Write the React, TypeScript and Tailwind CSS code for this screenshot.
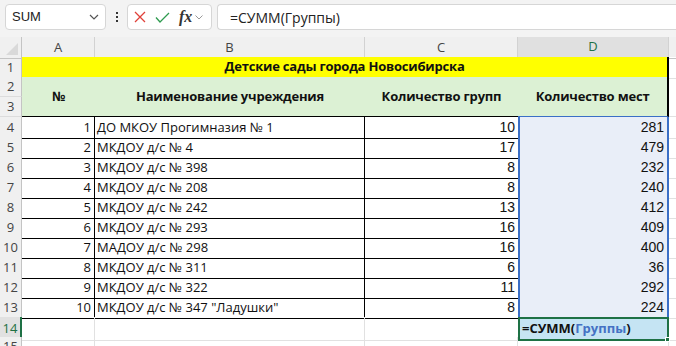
import React from 'react';

const rows: [number, string, number, number][] = [
  [1, 'ДО МКОУ Прогимназия № 1', 10, 281],
  [2, 'МКДОУ д/с № 4', 17, 479],
  [3, 'МКДОУ д/с № 398', 8, 232],
  [4, 'МКДОУ д/с № 208', 8, 240],
  [5, 'МКДОУ д/с № 242', 13, 412],
  [6, 'МКДОУ д/с № 293', 16, 409],
  [7, 'МАДОУ д/с № 298', 16, 400],
  [8, 'МКДОУ д/с № 311', 6, 36],
  [9, 'МКДОУ д/с № 322', 11, 292],
  [10, 'МКДОУ д/с № 347 "Ладушки"', 8, 224],
];

const cols = 'grid grid-cols-[22px_73px_270px_153px_151px_1fr]';

function RowNum({ n, active = false }: { n: number | string; active?: boolean }) {
  return (
    <div
      className={`flex items-center justify-center h-full border-b border-[#dcdcdc] text-[13px] ${
        active ? 'bg-[#e1e1e1] text-[#1e7145] border-r-2 border-r-[#1e7145]' : 'bg-[#f0f0f0] text-[#444] border-r border-r-[#c4c4c4]'
      }`}
    >
      {n}
    </div>
  );
}

export default function App() {
  return (
    <div
      className="w-[676px] h-[346px] overflow-hidden bg-white text-[#111]"
      style={{ fontFamily: '"Open Sans", "Liberation Sans", sans-serif' }}
    >
      {/* строка формул */}
      <div className="h-[37px] bg-[#f3f3f3] flex items-start pt-[4px] pl-[5px]">
        <div className="w-[101px] h-[26px] bg-white border border-[#d6d6d6] rounded-[4px] flex items-center justify-between pl-[6px] pr-[6px]">
          <span className="text-[13px] text-[#222]" style={{ fontFamily: '"Liberation Sans", sans-serif' }}>SUM</span>
          <svg width="10" height="6" viewBox="0 0 10 6" fill="none" stroke="#555" strokeWidth="1.2">
            <path d="M1 1l4 4 4-4" />
          </svg>
        </div>
        <div className="w-[21px] h-[26px] flex flex-col items-center justify-center gap-[2px]">
          <span className="w-[2px] h-[2px] bg-[#333]" />
          <span className="w-[2px] h-[2px] bg-[#333]" />
          <span className="w-[2px] h-[2px] bg-[#333]" />
        </div>
        <div className="w-[85px] h-[26px] bg-white border border-[#d6d6d6] rounded-[4px] flex items-center pl-[6px] gap-[9px]">
          <svg width="12" height="12" viewBox="0 0 12 12" stroke="#e0413a" strokeWidth="1.3" fill="none">
            <path d="M1 1l10 10M11 1L1 11" />
          </svg>
          <svg width="15" height="11" viewBox="0 0 15 11" stroke="#2e9b4f" strokeWidth="1.3" fill="none">
            <path d="M1 5.5l4 4.5L14 1" />
          </svg>
          <div className="flex items-center gap-[3px]">
            <span className="italic font-bold text-[16px] text-[#333] leading-none" style={{ fontFamily: '"Liberation Serif", serif' }}>
              fx
            </span>
            <svg width="8" height="5" viewBox="0 0 8 5" fill="none" stroke="#999" strokeWidth="1">
              <path d="M0.5 0.5l3.5 3.5 3.5-3.5" />
            </svg>
          </div>
        </div>
        <div className="ml-[5px] flex-1 h-[26px] bg-white border border-[#d6d6d6] border-r-0 rounded-l-[4px] flex items-center pl-[12px] text-[14px] text-[#222]">
          =СУММ(Группы)
        </div>
      </div>

      {/* заголовки столбцов */}
      <div className={`${cols} h-[20px] bg-[#f0f0f0] text-[13px] text-[#444]`}>
        <div className="relative border-r border-b border-[#c4c4c4]">
          <svg className="absolute right-[3px] bottom-[3px]" width="12" height="12" viewBox="0 0 12 12">
            <path d="M12 0V12H0Z" fill="#d9d9d9" />
          </svg>
        </div>
        <div className="flex items-center justify-center border-r border-b border-[#d2d2d2] border-b-[#c4c4c4]">A</div>
        <div className="flex items-center justify-center border-r border-b border-[#d2d2d2] border-b-[#c4c4c4]">B</div>
        <div className="flex items-center justify-center border-r border-b border-[#d2d2d2] border-b-[#c4c4c4]">C</div>
        <div className="flex items-center justify-center bg-[#e0e0e0] text-[#1e7145] border-r border-[#d2d2d2] border-b-2 border-b-[#1e7145]">
          D
        </div>
        <div className="border-b border-[#c4c4c4]" />
      </div>

      {/* строка 1 */}
      <div className={`${cols} h-[20px]`}>
        <RowNum n={1} />
        <div className="col-span-4 bg-[#ffff00] border-b-2 border-r-2 border-black flex items-center justify-center font-bold text-[13px] tracking-[-0.2px]">
          Детские сады города Новосибирска
        </div>
        <div className="border-b border-[#e1e1e1]" />
      </div>

      {/* строки 2-3 */}
      <div className={`${cols} h-[40px] tracking-[-0.2px]`}>
        <div className="flex flex-col">
          <div className="h-[20px]"><RowNum n={2} /></div>
          <div className="h-[20px]"><RowNum n={3} /></div>
        </div>
        <div className="bg-[#dcf1d4] border-b border-black flex items-center justify-center font-bold text-[13px]">№</div>
        <div className="bg-[#dcf1d4] border-b border-black flex items-center justify-center font-bold text-[13px]">
          Наименование учреждения
        </div>
        <div className="bg-[#dcf1d4] border-b border-black flex items-center justify-center font-bold text-[13px]">
          Количество групп
        </div>
        <div className="bg-[#dcf1d4] border-b border-b-[#3b6fc6] border-r-2 border-r-black flex items-center justify-center font-bold text-[13px]">
          Количество мест
        </div>
        <div className="border-b border-[#e1e1e1]" />
      </div>

      {/* данные */}
      {rows.map(([n, name, groups, places], i) => (
        <div key={n} className={`${cols} h-[20px] text-[13px]`}>
          <RowNum n={i + 4} />
          <div className="flex items-center justify-end pr-[3px] border-r border-b border-black">{n}</div>
          <div className="flex items-center pl-[2px] border-r border-b border-black">{name}</div>
          <div
            className="flex items-center justify-end pr-[3px] border-b border-black text-[14px]"
            style={{ fontFamily: '"Liberation Sans Narrow", "Liberation Sans", sans-serif' }}
          >
            {groups}
          </div>
          <div
            className="flex items-center justify-end pr-[3px] bg-[#e9eef8] border-x-2 border-x-[#3b6fc6] border-b border-b-black text-[14px]"
            style={{ fontFamily: '"Liberation Sans Narrow", "Liberation Sans", sans-serif' }}
          >
            {places}
          </div>
          <div className="border-b border-[#e1e1e1]" />
        </div>
      ))}

      {/* строка 14 */}
      <div className={`${cols} h-[20px] text-[13px]`}>
        <RowNum n={14} active />
        <div className="border-r border-b border-[#e1e1e1]" />
        <div className="border-r border-b border-[#e1e1e1]" />
        <div className="border-b border-[#e1e1e1]" />
        <div className="relative flex items-center pl-[2px] bg-[#c5e4f3] border-2 border-[#1e7145] font-bold">
          =СУММ(<span className="text-[#4472c4]">Группы</span>)
          <span className="absolute -right-[3px] -bottom-[3px] w-[5px] h-[5px] bg-[#1e7145] border border-white" />
        </div>
        <div className="border-b border-[#e1e1e1]" />
      </div>

      {/* строка 15 */}
      <div className={`${cols} h-[20px] text-[13px]`}>
        <RowNum n={15} />
        <div className="border-r border-b border-[#e1e1e1]" />
        <div className="border-r border-b border-[#e1e1e1]" />
        <div className="border-r border-b border-[#e1e1e1]" />
        <div className="border-r border-b border-[#e1e1e1]" />
        <div className="border-b border-[#e1e1e1]" />
      </div>
    </div>
  );
}
